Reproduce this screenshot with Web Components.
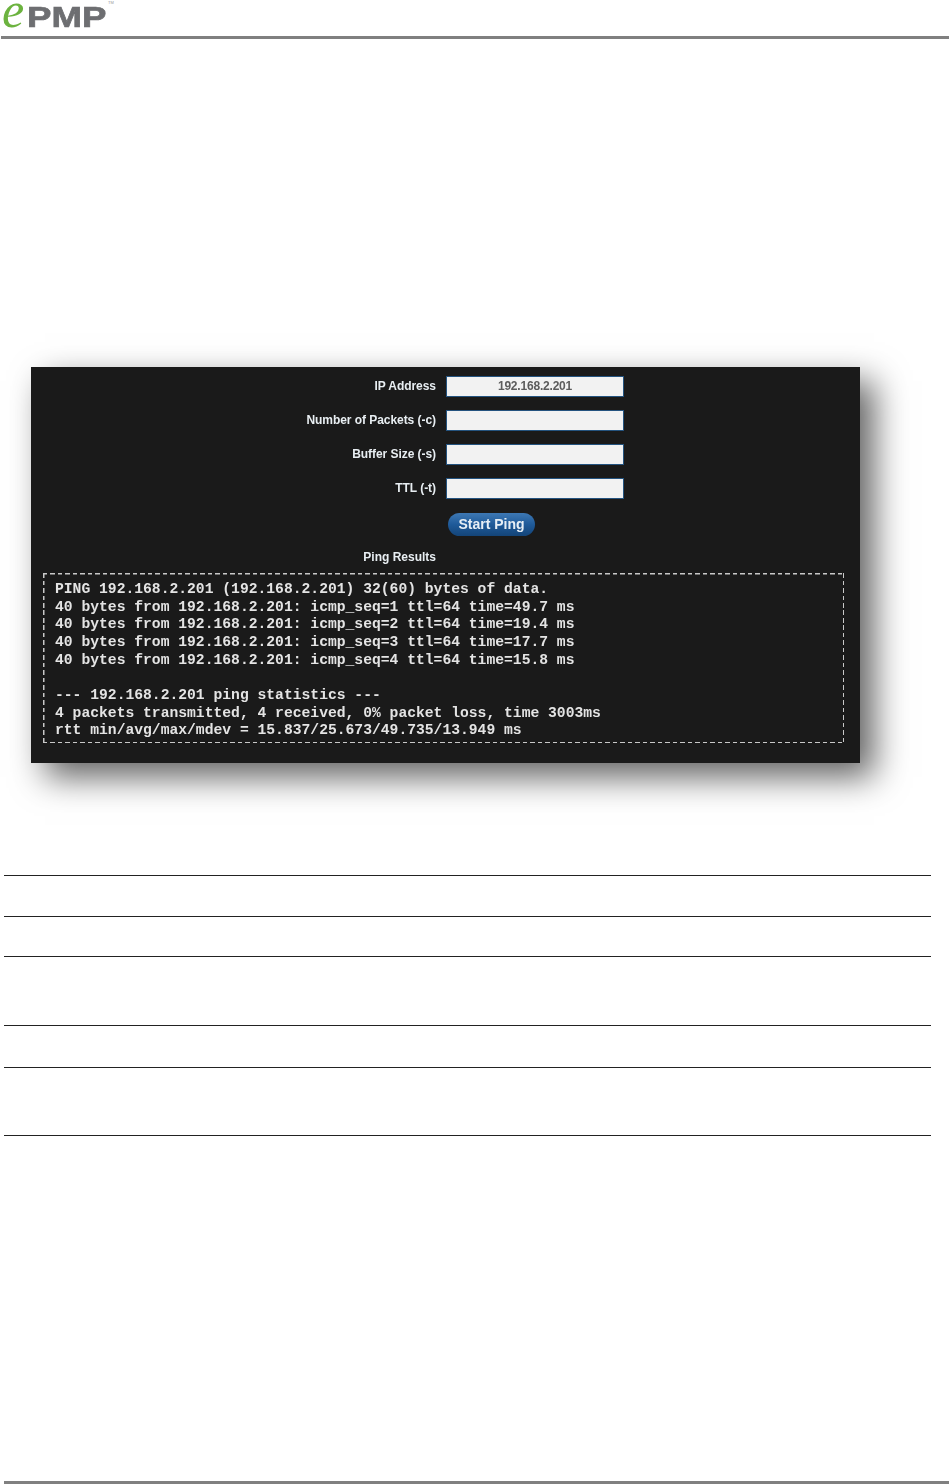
<!DOCTYPE html>
<html>
<head>
<meta charset="utf-8">
<title>ePMP Ping</title>
<style>
  html, body { margin: 0; padding: 0; background: #fff; }
  body { width: 952px; height: 1484px; overflow: hidden; display: flex; flex-direction: column; font-family: "Liberation Sans", Arial, sans-serif; }
  epmp-footer { margin-top: auto; }
</style>
</head>
<body>
<epmp-header></epmp-header>
<ping-panel>
  <ping-field label="IP Address" value="192.168.2.201"></ping-field>
  <ping-field label="Number of Packets (-c)"></ping-field>
  <ping-field label="Buffer Size (-s)"></ping-field>
  <ping-field label="TTL (-t)"></ping-field>
</ping-panel>
<rule-table></rule-table>
<epmp-footer></epmp-footer>

<script>
class EpmpHeader extends HTMLElement {
  constructor() {
    super();
    this.attachShadow({ mode: "open" });
    this.shadowRoot.innerHTML = `
      <style>
        :host { display: block; height: 36px; margin: 0 3px 0 1px; border-bottom: 3px solid #808080; }
        .logo { display: flex; align-items: baseline; height: 36px; white-space: nowrap; }
        .e { font: italic 400 50px/21px "Liberation Serif", serif; color: #6cb33f; margin-left: 1px; width: 25px; }
        .pmp { font: 700 30px "Liberation Sans", sans-serif; color: #6d6e71; -webkit-text-stroke: .7px #6d6e71; transform: scaleX(1.22); transform-origin: left; width: 81px; }
        sup { font: 400 4px/1 "Liberation Sans", sans-serif; color: #999; align-self: flex-start; margin-top: 1px; }
      </style>
      <div class="logo"><span class="e">e</span><span class="pmp">PMP</span><sup>TM</sup></div>
    `;
  }
}

class PingField extends HTMLElement {
  constructor() {
    super();
    this.attachShadow({ mode: "open" });
  }

  connectedCallback() {
    const label = this.getAttribute("label") || "";
    const value = this.getAttribute("value") || "";
    this.shadowRoot.innerHTML = `
      <style>
        :host { display: grid; grid-template-columns: 405px 178px; column-gap: 10px; height: 34px; align-items: start; }
        .label { font: 700 12px/21px "Liberation Sans", sans-serif; color: #e8eef2; text-align: right; letter-spacing: -0.05px; }
        .input { box-sizing: border-box; height: 21px; background: #f2f2f2; border: 1px solid #24537f; font: 700 12px/19px "Liberation Sans", sans-serif; color: #5c5c5c; text-align: center; letter-spacing: -0.2px; }
      </style>
      <div class="label">${label}</div>
      <div class="input">${value}</div>
    `;
  }
}

class PingPanel extends HTMLElement {
  constructor() {
    super();
    this.attachShadow({ mode: "open" });
    this.shadowRoot.innerHTML = `
      <style>
        :host { display: block; box-sizing: border-box; width: 829px; height: 396px; margin: 328px 0 0 31px; padding-top: 9px; background: #1a1a1a; box-shadow: 14px 14px 32px rgba(0,0,0,.62); }
        .inner { filter: blur(.45px); }
        .action { padding: 1px 0 0 417px; height: 34px; box-sizing: border-box; }
        .btn { width: 87px; height: 23px; border-radius: 12px; text-align: center; font: 700 14px/23px "Liberation Sans", sans-serif; color: #e6eef5; background: linear-gradient(#3d78b4, #1f5a99 50%, #134478); }
        .results { width: 405px; text-align: right; font: 700 12px/22px "Liberation Sans", sans-serif; color: #e8eef2; height: 27px; }
        pre {
          box-sizing: border-box; margin: 0 0 0 12px; width: 801px; height: 170px; padding: 8px 0 0 12px;
          font: 700 14.68px/17.65px "Liberation Mono", monospace; color: #e4e4e4;
          /* dashes drawn by hand, a dashed border gives the wrong rhythm here */
          --dash-x: repeating-linear-gradient(90deg, #c8c8c8 0 4.5px, transparent 4.5px 7.5px);
          --dash-y: repeating-linear-gradient(180deg, #c8c8c8 0 4.5px, transparent 4.5px 7.5px);
          background: var(--dash-x) 0 0 / 100% 1.5px no-repeat, var(--dash-x) 0 100% / 100% 1.5px no-repeat, var(--dash-y) 0 0 / 1.5px 100% no-repeat, var(--dash-y) 100% 0 / 1.5px 100% no-repeat;
        }
      </style>
      <div class="inner">
        <slot></slot>
        <div class="action"><div class="btn">Start Ping</div></div>
        <div class="results">Ping Results</div>
        <pre>PING 192.168.2.201 (192.168.2.201) 32(60) bytes of data.
40 bytes from 192.168.2.201: icmp_seq=1 ttl=64 time=49.7 ms
40 bytes from 192.168.2.201: icmp_seq=2 ttl=64 time=19.4 ms
40 bytes from 192.168.2.201: icmp_seq=3 ttl=64 time=17.7 ms
40 bytes from 192.168.2.201: icmp_seq=4 ttl=64 time=15.8 ms

--- 192.168.2.201 ping statistics ---
4 packets transmitted, 4 received, 0% packet loss, time 3003ms
rtt min/avg/max/mdev = 15.837/25.673/49.735/13.949 ms</pre>
      </div>
    `;
  }
}

class RuleTable extends HTMLElement {
  constructor() {
    super();
    this.attachShadow({ mode: "open" });
    // row heights between the rules, the cells themselves are empty
    const heights = [41, 40, 69, 42, 68];
    this.shadowRoot.innerHTML = `
      <style>
        :host { display: block; width: 927px; margin: 112px 0 0 4px; border-top: 1px solid #222; }
        div { box-sizing: border-box; border-bottom: 1px solid #222; }
      </style>
      ${heights.map((h) => `<div style="height:${h}px"></div>`).join("")}
    `;
  }
}

class EpmpFooter extends HTMLElement {
  constructor() {
    super();
    this.attachShadow({ mode: "open" });
    this.shadowRoot.innerHTML = `
      <style>
        :host { display: block; height: 3px; margin: 0 3px 0 4px; background: #808080; }
      </style>
    `;
  }
}

customElements.define("epmp-header", EpmpHeader);
customElements.define("ping-field", PingField);
customElements.define("ping-panel", PingPanel);
customElements.define("rule-table", RuleTable);
customElements.define("epmp-footer", EpmpFooter);
</script>
</body>
</html>
